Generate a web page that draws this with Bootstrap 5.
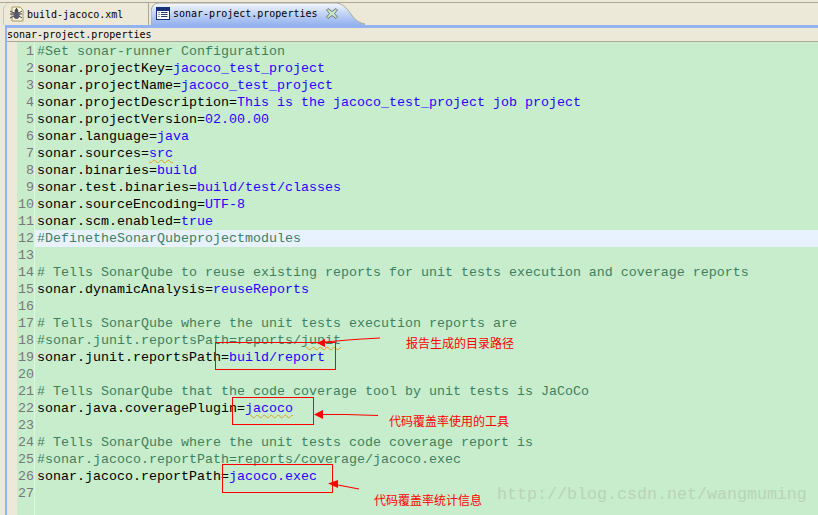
<!DOCTYPE html>
<html lang="zh">
<head>
<meta charset="utf-8">
<title>sonar-project.properties</title>
<link href="https://cdn.jsdelivr.net/npm/bootstrap@5.3.0/dist/css/bootstrap.min.css" rel="stylesheet">
<script src="https://cdn.jsdelivr.net/npm/bootstrap@5.3.0/dist/js/bootstrap.bundle.min.js"></script>
<style>
html,body{margin:0;height:515px;overflow:hidden;background:#ece9d8}
.shot{width:818px;height:515px;position:relative;overflow:hidden;padding-top:2px}
.tabbar{height:23px;border-top:1px solid #aca899;background:#ece9d8;padding-left:3px;position:relative}
.tabitem{font-family:"DejaVu Sans Mono","Liberation Mono",monospace;font-size:10px;color:#000;white-space:nowrap;height:22px;position:relative}
.tab-a{width:146px;padding-left:5px;gap:3px;border-left:1px solid #c9c5b2;border-right:1px solid #aca899;border-top-left-radius:7px}
.tab-b{padding-left:5px;gap:3px;margin-left:2px;width:214px;height:23px;margin-top:-1px}
.tabshape{position:absolute;left:0;top:0}
.tabicon,.tablabel,.tabclose{position:relative}
.tabclose{margin-left:5px}
.frame{margin-left:5px;border-left:2px solid #94b2ee;border-top:3px solid #94b2ee}
.crumb{height:14px;border-bottom:1px solid #aca899;font-family:"DejaVu Sans Mono","Liberation Mono",monospace;font-size:10px;line-height:13px;background:#ece9d8;color:#000}
.editor{height:473px}
.ruler{width:10px;background:#ece9d8;flex:none}
.gutter{width:18px;text-align:right;color:#787878;background:#c7edcc;flex:none;border-right:1px solid #e4f4df;padding-top:1px;font-family:"Liberation Mono",monospace;font-size:13.33px}
.gutter div,.code div{height:17px;line-height:17px}
.code{flex:1;min-width:0;background:#c7edcc;font-family:"Liberation Mono",monospace;font-size:13.33px;padding-top:1px;color:#000}
.code div{white-space:pre;padding-left:2px}
.cm{color:#3f7f5f}
.val{color:#2a00ff}
.curline{background:#e8f2fe}
.squig{text-decoration:underline wavy #e0a020 1px;text-underline-offset:2px}
.box{position:absolute;border:1px solid #f00}
.note{position:absolute;color:#f00;font-family:"Noto Sans CJK SC",sans-serif;font-size:12px;line-height:14px;white-space:nowrap}
.over{position:absolute;left:0;top:0;pointer-events:none}
.mark-wm{position:absolute;left:497px;top:484px;font-family:"Liberation Mono",monospace;font-size:16.67px;color:#b9d4b6;white-space:nowrap;line-height:22px}
</style>
</head>
<body>
<div class="shot">
  <div class="tabbar d-flex align-items-start">
    <div class="tabitem tab-a d-flex align-items-center">
      <svg class="tabicon" width="15" height="16" viewBox="0 0 15 16"><path d="M3 1h8l3 3v11H3z" fill="#f6f2dc" stroke="#a89a60"/><path d="M1 5l4 2M1 8h4M1 12l4-2M13 5l-3 2M13 8h-3M13 12l-3-2M7.500 2v3" stroke="#444" fill="none"/><ellipse cx="7.500" cy="9" rx="3" ry="4" fill="#5a5870"/><circle cx="7.500" cy="4.500" r="1.700" fill="#444"/></svg>
      <span class="tablabel">build-jacoco.xml</span>
    </div>
    <div class="tabitem tab-b d-flex align-items-center">
      <svg class="tabshape" width="214" height="23" viewBox="0 0 214 23">
        <defs><linearGradient id="tabfill" x1="0" y1="0" x2="0" y2="1"><stop offset="0" stop-color="#f6f9fe"/><stop offset=".45" stop-color="#c4d6f6"/><stop offset="1" stop-color="#94b2ee"/></linearGradient></defs>
        <path d="M0 23V9Q1 1 8 1H184C192 1 196 7 200 12C204 18 208 21 214 22V23Z" fill="url(#tabfill)"/>
        <path d="M0 22V9Q1 1 8 1H184C192 1 196 7 200 12C204 18 208 21 214 22" fill="none" stroke="#aca899"/>
      </svg>
      <svg class="tabicon" width="14" height="13" viewBox="0 0 14 13"><rect x=".5" y=".5" width="13" height="12" fill="#fff" stroke="#16307c"/><rect x="1" y="1" width="12" height="3" fill="#16307c"/><path d="M2.500 5.500h1M5 5.500h6.500M2.500 7.500h1M5 7.500h6.500M2.500 9.500h1M5 9.500h6.500" stroke="#2c3a6c"/></svg>
      <span class="tablabel">sonar-project.properties</span>
      <svg class="tabclose" width="12" height="11" viewBox="0 0 12 11"><path d="M2 .500L6 3.500L10 .500L11.500 2L8.500 5.500L11.500 9L10 10.500L6 7.500L2 10.500L.500 9L3.500 5.500L.500 2Z" fill="#c8e6c8" stroke="#6e7a6e"/></svg>
    </div>
  </div>
  <div class="frame">
    <div class="crumb">sonar-project.properties</div>
    <div class="editor d-flex">
      <div class="ruler"></div>
      <div class="gutter">
        <div>1</div><div>2</div><div>3</div><div>4</div><div>5</div><div>6</div><div>7</div><div>8</div><div>9</div><div>10</div><div>11</div><div>12</div><div>13</div><div>14</div><div>15</div><div>16</div><div>17</div><div>18</div><div>19</div><div>20</div><div>21</div><div>22</div><div>23</div><div>24</div><div>25</div><div>26</div><div>27</div>
      </div>
      <div class="code">
        <div class="cm">#Set sonar-runner Configuration</div>
        <div>sonar.projectKey=<span class="val">jacoco_test_project</span></div>
        <div>sonar.projectName=<span class="val">jacoco_test_project</span></div>
        <div>sonar.projectDescription=<span class="val">This is the jacoco_test_project job project</span></div>
        <div>sonar.projectVersion=<span class="val">02.00.00</span></div>
        <div>sonar.language=<span class="val">java</span></div>
        <div>sonar.sources=<span class="val squig">src</span></div>
        <div>sonar.binaries=<span class="val">build</span></div>
        <div>sonar.test.binaries=<span class="val">build/test/classes</span></div>
        <div>sonar.sourceEncoding=<span class="val">UTF-8</span></div>
        <div>sonar.scm.enabled=<span class="val">true</span></div>
        <div class="cm curline">#DefinetheSonarQubeprojectmodules</div>
        <div></div>
        <div class="cm"># Tells SonarQube to reuse existing reports for unit tests execution and coverage reports</div>
        <div>sonar.dynamicAnalysis=<span class="val">reuseReports</span></div>
        <div></div>
        <div class="cm"># Tells SonarQube where the unit tests execution reports are</div>
        <div class="cm">#sonar.junit.reportsPath=reports/<span class="squig">junit</span></div>
        <div>sonar.junit.reportsPath=<span class="val">build/report</span></div>
        <div></div>
        <div class="cm"># Tells SonarQube that the code coverage tool by unit tests is JaCoCo</div>
        <div>sonar.java.coveragePlugin=<span class="val squig">jacoco</span></div>
        <div></div>
        <div class="cm"># Tells SonarQube where the unit tests code coverage report is</div>
        <div class="cm">#sonar.jacoco.reportPath=reports/coverage/jacoco.exec</div>
        <div>sonar.jacoco.reportPath=<span class="val">jacoco.exec</span></div>
        <div></div>
      </div>
    </div>
  </div>
  <div class="box" style="left:215px;top:342px;width:121px;height:28px"></div>
  <div class="box" style="left:232px;top:397px;width:82px;height:28px"></div>
  <div class="box" style="left:222px;top:464px;width:111px;height:29px"></div>
  <svg class="over" width="818" height="515" viewBox="0 0 818 515">
    <path d="M380 338L362 339L348 340L325 342" stroke="#f00" stroke-width="1.200" fill="none"/><path d="M317 343l8-4v8z" fill="#f00"/>
    <path d="M323 414.500H346L378 415.500" stroke="#f00" stroke-width="1.200" fill="none"/><path d="M314 414.500l9-4.500v9z" fill="#f00"/>
    <path d="M338 485L359 489" stroke="#f00" stroke-width="1.200" fill="none"/><path d="M328 483.500l10-3.500v8z" fill="#f00"/>
  </svg>
  <div class="note" style="left:406px;top:336px">报告生成的目录路径</div>
  <div class="note" style="left:389px;top:414px">代码覆盖率使用的工具</div>
  <div class="note" style="left:374px;top:493px">代码覆盖率统计信息</div>
  <div class="mark-wm">http://blog.csdn.net/wangmuming</div>
</div>
</body>
</html>
